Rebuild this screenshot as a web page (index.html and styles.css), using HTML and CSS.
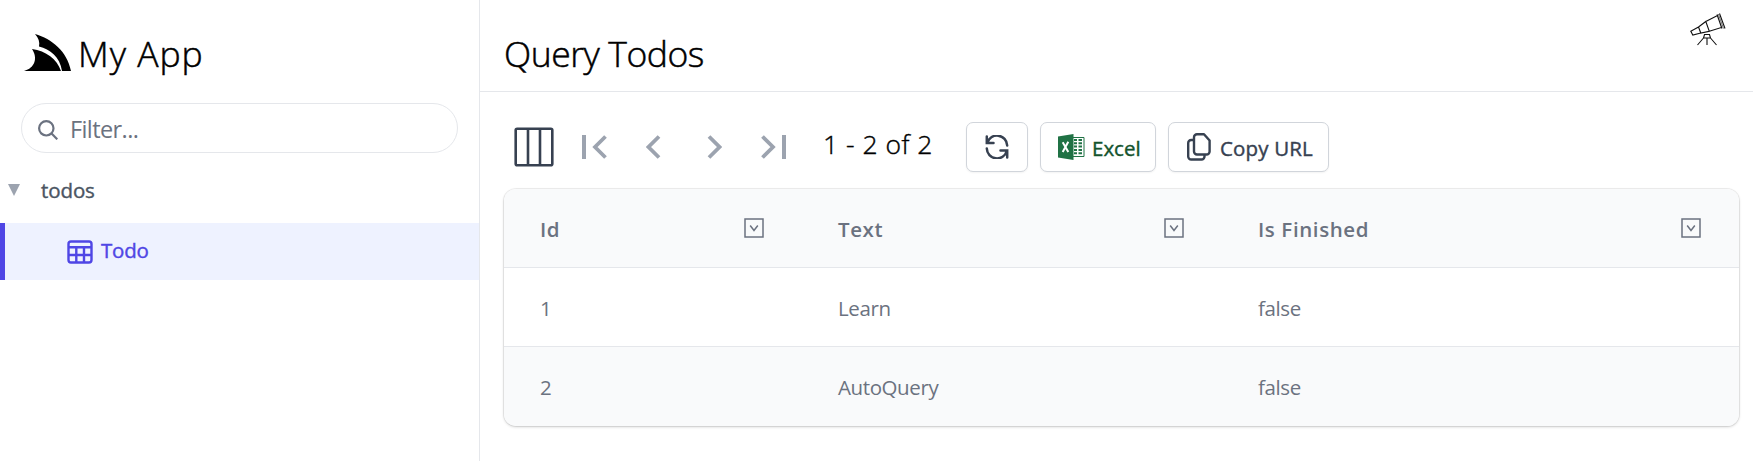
FILE: index.html
```html
<!DOCTYPE html>
<html lang="en">
<head>
<meta charset="utf-8">
<title>My App</title>
<link rel="stylesheet" href="styles.css">
</head>
<body>
<div class="app">
  <aside class="sidebar">
    <div class="brand">
      <svg class="brand-logo" width="47" height="37" viewBox="0 0 47 37"><path d="M11 0C28 5 43 17 47 37H38C36 23 26 15 15 12.500C16 8 14.500 4 11 0Z"/><path d="M8 15C22 17 33 25 37 37H0C11 34 14 24 8 15Z"/></svg>
      <span class="brand-name">My App</span>
    </div>
    <label class="filter">
      <svg class="filter-icon" width="20" height="20" viewBox="0 0 20 20" fill="none" stroke="#6b7280" stroke-width="2.200"><circle cx="8.300" cy="8.300" r="7.200"/><path d="M13.300 13.300L19.300 19.300"/></svg>
      <span class="filter-text">Filter...</span>
    </label>
    <nav>
      <div class="group">
        <svg width="12" height="12" viewBox="0 0 12 12"><path d="M0 0H12L6 12Z" fill="#9ca3af"/></svg>
        <span class="group-name">todos</span>
      </div>
      <a class="item">
        <svg width="26" height="24" viewBox="0 0 26 24" fill="none" stroke="#4f46e5" stroke-width="2.400"><rect x="1.500" y="1.500" width="23" height="21" rx="2.500"/><path d="M1.500 7.300H24.500M1.500 15H24.500M9.300 7.300V22.500M17 7.300V22.500"/></svg>
        <span class="item-name">Todo</span>
      </a>
    </nav>
  </aside>
  <main class="main">
    <header class="header">
      <h1 class="title">Query Todos</h1>
      <svg class="telescope" width="36" height="33" viewBox="0 0 36 33" fill="none" stroke="#111" stroke-width="1.100"><path d="M8.500 14L.8 18.200L2.800 22L10.800 20M8.500 14L10.800 20L19.300 18.300L15.800 8.500L8.500 14M15.800 8.500L27.500 2.500L31.500 14.500L19.300 18.300M27 1.500L32 15.500M29.500.5L35 15.500" /><path d="M28.300 1L33.500 15.500" stroke-width=".6"/><path d="M14.500 21.500H19.500L20.500 25H13.500ZM13.500 25L7.500 32M20.500 25L26.500 32M17 25V32"/></svg>
    </header>
    <section class="toolbar">
      <svg class="columns" width="40" height="40" viewBox="0 0 40 40" fill="none" stroke="#374151" stroke-width="2.600"><rect x="1.700" y="1.700" width="36.600" height="36.600" rx="1.500"/><path d="M14 1.500V38.500M26 1.500V38.500"/></svg>
      <div class="pager">
        <svg width="25" height="24" viewBox="0 0 25 24" fill="none" stroke="#9ca3af"><path d="M2 0V24" stroke-width="4"/><path d="M23.500 1.500L13 12L23.500 22.500" stroke-width="3.800"/></svg>
        <svg width="15" height="24" viewBox="0 0 15 24" fill="none" stroke="#9ca3af"><path d="M13 1.500L2.500 12L13 22.500" stroke-width="3.800"/></svg>
        <svg width="15" height="24" viewBox="0 0 15 24" fill="none" stroke="#9ca3af"><path d="M2 1.500L12.500 12L2 22.500" stroke-width="3.800"/></svg>
        <svg width="25" height="24" viewBox="0 0 25 24" fill="none" stroke="#9ca3af"><path d="M1.500 1.500L12 12L1.500 22.500" stroke-width="3.800"/><path d="M23 0V24" stroke-width="4"/></svg>
      </div>
      <span class="range">1 - 2 of 2</span>
      <button class="btn btn-refresh"><svg width="24" height="24" viewBox="0 0 24 24" fill="none" stroke="#374151" stroke-width="2.500" stroke-linecap="round"><path d="M1.800 1.500V8H8.500M2.200 8A10.200 10.200 0 0 1 22.200 10.500M22.200 22.500V15.500H15.500M21.800 16A10.200 10.200 0 0 1 1.800 13.500"/></svg></button>
      <button class="btn btn-excel"><svg width="27" height="26" viewBox="0 0 27 26"><path d="M15 3.500H26V22.500H15" fill="#fff" stroke="#207245"/><path d="M16 6H19M16 9.300H19M16 12.600H19M16 15.900H19M16 19.200H19M20.500 6H24M20.500 9.300H24M20.500 12.600H24M20.500 15.900H24M20.500 19.200H24" stroke="#207245" stroke-width="2"/><path d="M0 2.500L15.500 0V26L0 23.500Z" fill="#207245"/><path d="M4.700 8.200L10.300 18M10.300 7.800L4.700 18" stroke="#fff" stroke-width="2"/></svg><span class="excel-label">Excel</span></button>
      <button class="btn btn-copy"><svg width="24" height="28" viewBox="0 0 24 28" fill="none" stroke="#374151" stroke-width="2.400" stroke-linejoin="round"><path d="M10 1.200H17L22.600 7.500V18.500A3 3 0 0 1 19.600 21.500H10A3 3 0 0 1 7 18.500V4.200A3 3 0 0 1 10 1.200Z"/><path d="M7 7H4.200A3 3 0 0 0 1.200 10V23.500A3 3 0 0 0 4.200 26.500H14.500A3 3 0 0 0 17.500 23.500V21.500"/></svg><span class="copy-label">Copy URL</span></button>
    </section>
    <section class="grid">
      <div class="row head">
        <div class="cell"><span>Id</span><svg class="menu" viewBox="0 0 20 20"><rect x="1" y="1" width="18" height="18"/><path d="M6.200 7.500L10 12.500L13.800 7.500"/></svg></div>
        <div class="cell"><span>Text</span><svg class="menu" viewBox="0 0 20 20"><rect x="1" y="1" width="18" height="18"/><path d="M6.200 7.500L10 12.500L13.800 7.500"/></svg></div>
        <div class="cell"><span>Is Finished</span><svg class="menu" viewBox="0 0 20 20"><rect x="1" y="1" width="18" height="18"/><path d="M6.200 7.500L10 12.500L13.800 7.500"/></svg></div>
      </div>
      <div class="row"><div class="cell">1</div><div class="cell">Learn</div><div class="cell">false</div></div>
      <div class="row alt"><div class="cell">2</div><div class="cell">AutoQuery</div><div class="cell">false</div></div>
    </section>
  </main>
</div>
</body>
</html>
```
FILE: styles.css
```css
* { box-sizing: border-box; }
body { margin: 0; background: #fff; font-family: "Open Sans", "Noto Sans", sans-serif; font-size: 20.5px; color: #000; overflow: hidden; }
svg { display: block; flex: none; }
.app { display: flex; width: 1753px; height: 461px; }
.sidebar { width: 480px; border-right: 1px solid #e5e7eb; }
.brand { display: flex; align-items: flex-start; height: 103px; padding: 34px 0 0 24px; }
.brand-name { margin: -5px 0 0 7px; font-size: 35.500px; line-height: 48px; font-weight: 300; letter-spacing: 1px; -webkit-text-stroke: 0.5px #000; }
.filter { display: flex; align-items: center; width: 437px; height: 50px; margin-left: 21px; padding-left: 16px; border: 1px solid #e5e7eb; border-radius: 25px; }
.filter-icon { margin-top: 4px; }
.filter-text { margin: 2px 0 0 12px; color: #6b7280; font-size: 23.500px; line-height: 32px; letter-spacing: -0.6px; }
.group { display: flex; height: 70px; padding: 31px 0 0 8px; }
.group-name { margin: -8px 0 0 21px; line-height: 28px; font-weight: 400; color: #4b5563; letter-spacing: -0.1px; -webkit-text-stroke: 0.4px #4b5563; }
.item { display: flex; align-items: center; height: 57px; padding-left: 62px; border-left: 5px solid #4f46e5; background: #eef2ff; color: #4f46e5; }
.item-name { margin: -3px 0 0 8px; font-weight: 400; line-height: 28px; letter-spacing: -0.2px; -webkit-text-stroke: 0.4px #4f46e5; }
.main { width: 1273px; }
.header { display: flex; justify-content: space-between; height: 92px; padding: 13px 27px 0 24px; border-bottom: 1px solid #e5e7eb; }
.title { margin: 16px 0 0; font-size: 35.500px; line-height: 48px; font-weight: 300; letter-spacing: -0.45px; -webkit-text-stroke: 0.5px #000; }
.toolbar { display: flex; height: 97px; padding: 30px 0 0 34px; }
.columns { margin-top: 5px; }
.pager { display: flex; margin: 13px 0 0 28px; }
.pager svg:nth-child(2) { margin-left: 39px; }
.pager svg:nth-child(3) { margin-left: 46px; }
.pager svg:nth-child(4) { margin-left: 39px; }
.range { width: 143px; margin: 4px 0 0 37px; font-size: 26.500px; line-height: 36px; font-weight: 300; letter-spacing: 0.5px; white-space: nowrap; -webkit-text-stroke: 0.4px #000; }
.btn { display: flex; align-items: center; height: 50px; padding: 0; border: 1px solid #d1d5db; border-radius: 7px; background: #fff; font: inherit; box-shadow: 0 1px 2px rgba(0,0,0,.05); white-space: nowrap; }
.btn-refresh { width: 62px; justify-content: center; }
.btn-excel { width: 116px; margin-left: 12px; padding-left: 17px; color: #14532d; }
.btn-excel span { margin: 1px 0 0 7px; }
.btn-copy { width: 161px; margin-left: 12px; padding-left: 18px; color: #374151; }
.btn-copy span { margin: 1px 0 0 9px; }
.excel-label { letter-spacing: 0; -webkit-text-stroke: 0.4px #14532d; }
.copy-label { letter-spacing: 0.15px; -webkit-text-stroke: 0.4px #374151; }
.grid { width: 1235px; height: 237px; margin-left: 24px; border-radius: 12px; overflow: hidden; box-shadow: 0 0 0 1px rgba(0,0,0,.06), 0 1px 3px rgba(0,0,0,.18); color: #6b7280; }
.row { display: grid; grid-template-columns: 298px 420px 517px; height: 79px; border-bottom: 1px solid #e5e7eb; background: #fff; }
.row.alt { border: 0; background: #f9fafb; }
.row.head { background: #f9fafb; font-weight: 600; }
.cell { display: flex; align-items: center; justify-content: space-between; padding: 1px 38px 0 36px; letter-spacing: -0.4px; }
.head .cell { letter-spacing: 0.6px; }
.menu { width: 20px; height: 20px; margin-top: -1px; fill: none; stroke: #6b7280; stroke-width: 1.500; }
```
